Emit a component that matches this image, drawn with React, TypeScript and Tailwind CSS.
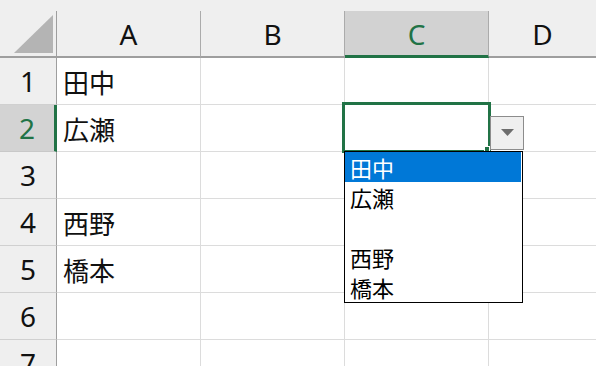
import React from "react";

const cols = ["A", "B", "C", "D"];
const rows: { n: number; a: string }[] = [
  { n: 1, a: "田中" },
  { n: 2, a: "広瀬" },
  { n: 3, a: "" },
  { n: 4, a: "西野" },
  { n: 5, a: "橋本" },
  { n: 6, a: "" },
  { n: 7, a: "" },
];

const latin = { fontFamily: '"Noto Sans", "Noto Sans CJK JP", sans-serif' };
const jp = { fontFamily: '"Noto Sans CJK JP", sans-serif' };

export default function App() {
  return (
    <div className="relative w-[596px] h-[366px] overflow-hidden bg-white">
      <div className="h-[11px] bg-[#efefef]" />
      {/* column header */}
      <div className="flex h-[47px] bg-[#efefef]" style={latin}>
        <div className="relative w-[57px] shrink-0 border-r border-b-2 border-[#9e9e9e]">
          <svg className="absolute left-[14px] top-[4px]" width="40" height="40" viewBox="0 0 40 40">
            <polygon points="0,38 39,0 39,38" fill="#b4b4b4" />
          </svg>
        </div>
        {cols.map((c) => {
          const sel = c === "C";
          return (
            <div
              key={c}
              className={
                sel
                  ? "w-[144px] shrink-0 flex items-center justify-center bg-[#d2d2d2] border-r border-r-[#ababab] border-b-[3px] border-b-[#217346] text-[#217346] text-[28px] pt-[1px]"
                  : c === "D"
                  ? "flex-1 flex items-center justify-center border-b-2 border-[#9e9e9e] text-[#111] text-[28px]"
                  : "w-[144px] shrink-0 flex items-center justify-center border-r border-r-[#ababab] border-b-2 border-b-[#9e9e9e] text-[#111] text-[28px]"
              }
            >
              {c}
            </div>
          );
        })}
      </div>
      {/* rows */}
      {rows.map((r) => {
        const sel = r.n === 2;
        return (
          <div key={r.n} className="flex h-[47px]">
            <div
              className={
                sel
                  ? "w-[57px] shrink-0 flex items-center justify-center bg-[#d3d3d3] border-r-[3px] border-r-[#217346] border-b border-b-[#c8c8c8] text-[#217346] text-[28px]"
                  : "w-[57px] shrink-0 flex items-center justify-center bg-[#efefef] border-r border-r-[#9e9e9e] border-b border-b-[#d0d0d0] text-[#111] text-[28px]"
              }
              style={latin}
            >
              {r.n}
            </div>
            <div
              className="w-[144px] shrink-0 flex items-center pl-[6px] border-r border-b border-[#dcdcdc] text-[26px] text-[#111]"
              style={jp}
            >
              {r.a}
            </div>
            <div className="w-[144px] shrink-0 border-r border-b border-[#dcdcdc]" />
            <div className="w-[144px] shrink-0 border-r border-b border-[#dcdcdc]" />
            <div className="flex-1 border-b border-[#dcdcdc]" />
          </div>
        );
      })}

      {/* selection box */}
      <div className="absolute left-[342px] top-[102px] w-[149px] h-[51px] border-[3px] border-[#217346]" />
      <div className="absolute left-[484px] top-[146px] w-[6px] h-[6px] bg-[#217346] border border-white" />

      {/* dropdown button */}
      <div className="absolute left-[490px] top-[116px] w-[34px] h-[34px] bg-[#efefef] border border-[#8c8c8c] flex items-center justify-center">
        <svg width="13" height="8" viewBox="0 0 13 8">
          <polygon points="0,0 13,0 6.5,7" fill="#6d6d6d" />
        </svg>
      </div>

      {/* list */}
      <div
        className="absolute left-[344px] top-[151px] w-[179px] h-[152px] bg-white border border-black flex flex-col"
        style={jp}
      >
        {["田中", "広瀬", "", "西野", "橋本"].map((t, i) => (
          <div
            key={i}
            className={
              i === 0
                ? "h-[30px] mr-[1px] pl-[5px] flex items-center bg-[#0078d7] text-white text-[22px] leading-none"
                : "h-[30px] pl-[5px] flex items-center text-black text-[22px] leading-none"
            }
          >
            {t}
          </div>
        ))}
      </div>
    </div>
  );
}
